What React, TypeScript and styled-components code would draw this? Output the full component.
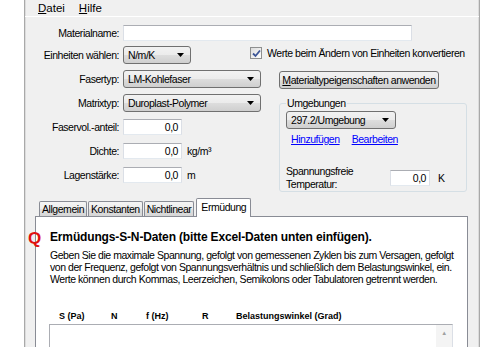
import styled, { createGlobalStyle } from "styled-components";

const GlobalStyle = createGlobalStyle`
  html, body {
    margin: 0;
    padding: 0;
    background: #ffffff;
  }
  body {
    font-family: "Liberation Sans", Arial, sans-serif;
    font-size: 10.5px;
    letter-spacing: -0.45px;
    color: #000000;
  }
`;

const ArrowDown = () => (
  <svg width="7" height="4" viewBox="0 0 7 4">
    <path d="M0 0 H7 L3.5 4 Z" fill="#000" />
  </svg>
);

const CheckMark = () => (
  <svg width="9" height="9" viewBox="0 0 9 9">
    <path d="M1 4.5 L3.5 7 L8 1.5" fill="none" stroke="#3c5597" strokeWidth="1.8" />
  </svg>
);

const App = () => {
  return (
    <>
      <GlobalStyle />
      <S.Window>
        <S.MenuBar>
          <S.MenuItem>
            <u>D</u>atei
          </S.MenuItem>
          <S.MenuItem>
            <u>H</u>ilfe
          </S.MenuItem>
        </S.MenuBar>
        <S.Content>
          <S.NameRow>
            <S.Label>Materialname:</S.Label>
            <S.TextInput $w={289} />
          </S.NameRow>
          <S.Upper>
            <S.LeftCol>
              <S.Row>
                <S.Label>Einheiten wählen:</S.Label>
                <S.Combo $w={68}>
                  N/m/K
                  <ArrowDown />
                </S.Combo>
                <S.CheckLine>
                  <S.CheckBox>
                    <CheckMark />
                  </S.CheckBox>
                  Werte beim Ändern von Einheiten konvertieren
                </S.CheckLine>
              </S.Row>
              <S.Row>
                <S.Label>Fasertyp:</S.Label>
                <S.Combo $w={138}>
                  LM-Kohlefaser
                  <ArrowDown />
                </S.Combo>
              </S.Row>
              <S.Row>
                <S.Label>Matrixtyp:</S.Label>
                <S.Combo $w={138}>
                  Duroplast-Polymer
                  <ArrowDown />
                </S.Combo>
              </S.Row>
              <S.Row>
                <S.Label>Faservol.-anteil:</S.Label>
                <S.TextInput $w={59}>0,0</S.TextInput>
              </S.Row>
              <S.Row>
                <S.Label>Dichte:</S.Label>
                <S.TextInput $w={59}>0,0</S.TextInput>
                <S.Unit>kg/m³</S.Unit>
              </S.Row>
              <S.Row>
                <S.Label>Lagenstärke:</S.Label>
                <S.TextInput $w={59}>0,0</S.TextInput>
                <S.Unit>m</S.Unit>
              </S.Row>
            </S.LeftCol>
            <S.RightCol>
              <S.Button>
                <u>M</u>aterialtypeigenschaften anwenden
              </S.Button>
              <S.Group>
                <S.Legend>Umgebungen</S.Legend>
                <S.Combo $w={110}>
                  297.2/Umgebung
                  <ArrowDown />
                </S.Combo>
                <S.LinkRow>
                  <S.Link>Hinzufügen</S.Link>
                  <S.Link>Bearbeiten</S.Link>
                </S.LinkRow>
                <S.TempRow>
                  <S.TempLabel>
                    Spannungsfreie
                    <br />
                    Temperatur:
                  </S.TempLabel>
                  <S.TextInput $w={40}>0,0</S.TextInput>
                  <S.TempUnit>K</S.TempUnit>
                </S.TempRow>
              </S.Group>
            </S.RightCol>
          </S.Upper>
          <S.TabArea>
            <S.TabStrip>
              <S.Tab>Allgemein</S.Tab>
              <S.Tab>Konstanten</S.Tab>
              <S.Tab>Nichtlinear</S.Tab>
              <S.Tab $active>Ermüdung</S.Tab>
            </S.TabStrip>
            <S.Panel>
              <S.Heading>Ermüdungs-S-N-Daten (bitte Excel-Daten unten einfügen).</S.Heading>
              <S.Info>
                Geben Sie die maximale Spannung, gefolgt von gemessenen Zyklen bis zum Versagen, gefolgt
                <br />
                von der Frequenz, gefolgt von Spannungsverhältnis und schließlich dem Belastungswinkel, ein.
                <br />
                Werte können durch Kommas, Leerzeichen, Semikolons oder Tabulatoren getrennt werden.
              </S.Info>
              <S.ColumnHeads>
                <span>S (Pa)</span>
                <span>N</span>
                <span>f (Hz)</span>
                <span>R</span>
                <span>Belastungswinkel (Grad)</span>
              </S.ColumnHeads>
              <S.DataBox>
                <S.ScrollBar>
                  <S.ScrollArrow>▲</S.ScrollArrow>
                </S.ScrollBar>
              </S.DataBox>
            </S.Panel>
          </S.TabArea>
        </S.Content>
        <S.Marker>Q</S.Marker>
      </S.Window>
    </>
  );
};

const S = {
  Window: styled.div`
    position: relative;
    box-sizing: border-box;
    margin-left: 24px;
    width: 456px;
    height: 347px;
    overflow: hidden;
    background: #f0f0f0;
    border-left: 1px solid #a9a9a9;
    border-right: 1px solid #a9a9a9;
    box-shadow: inset 1px 0 #dcdcdc, inset -1px 0 #dcdcdc;
  `,
  MenuBar: styled.div`
    display: flex;
    gap: 14px;
    height: 16px;
    padding-left: 13px;
    align-items: center;
    border-bottom: 1px solid #ffffff;
    font-size: 11.5px;
    letter-spacing: 0;
  `,
  MenuItem: styled.span`
    line-height: 16px;
  `,
  Content: styled.div`
    padding-top: 8px;
  `,
  NameRow: styled.div`
    display: flex;
    align-items: center;
    height: 16px;
  `,
  Label: styled.span`
    width: 94px;
    margin-right: 4px;
    text-align: right;
    white-space: nowrap;
    flex-shrink: 0;
  `,
  TextInput: styled.div<{ $w: number }>`
    box-sizing: border-box;
    width: ${({ $w }) => $w}px;
    height: 16px;
    line-height: 14px;
    padding-right: 3px;
    text-align: right;
    background: #ffffff;
    border: 1px solid #dbdfe6;
    border-top-color: #abadb3;
    border-bottom-color: #e3e9ef;
    flex-shrink: 0;
  `,
  Upper: styled.div`
    display: flex;
    margin-top: 5px;
  `,
  LeftCol: styled.div`
    width: 254px;
    display: flex;
    flex-direction: column;
    gap: 6px;
  `,
  Row: styled.div`
    display: flex;
    align-items: center;
    height: 18px;
    white-space: nowrap;
  `,
  Combo: styled.div<{ $w: number }>`
    box-sizing: border-box;
    width: ${({ $w }) => $w}px;
    height: 18px;
    display: flex;
    align-items: center;
    justify-content: space-between;
    padding: 0 6px 0 4px;
    border: 1px solid #707070;
    border-radius: 3px;
    background: linear-gradient(#f2f2f2 0%, #ebebeb 50%, #dddddd 51%, #cfcfcf 100%);
    white-space: nowrap;
    flex-shrink: 0;
  `,
  CheckLine: styled.label`
    display: flex;
    align-items: center;
    gap: 5px;
    margin-left: 59px;
    margin-top: -4px;
  `,
  CheckBox: styled.span`
    box-sizing: border-box;
    width: 12px;
    height: 12px;
    display: flex;
    align-items: center;
    justify-content: center;
    border: 1px solid #8e8f8f;
    background: linear-gradient(135deg, #dcdcdc, #ffffff);
  `,
  Unit: styled.span`
    margin-left: 5px;
  `,
  RightCol: styled.div`
    width: 188px;
    padding-top: 25px;
    display: flex;
    flex-direction: column;
    align-items: flex-start;
  `,
  Button: styled.div`
    box-sizing: border-box;
    width: 160px;
    height: 18px;
    line-height: 16px;
    text-align: center;
    white-space: nowrap;
    border: 1px solid #707070;
    border-radius: 3px;
    background: linear-gradient(#f2f2f2 0%, #ebebeb 50%, #dddddd 51%, #cfcfcf 100%);
  `,
  Group: styled.fieldset`
    box-sizing: border-box;
    width: 188px;
    margin: 8px 0 0 0;
    padding: 1px 6px 0 6px;
    border: 1px solid #d5dfe5;
    border-radius: 3px;
    min-inline-size: 0;
  `,
  Legend: styled.legend`
    padding: 0 1px;
    line-height: 13px;
  `,
  LinkRow: styled.div`
    display: flex;
    gap: 12px;
    margin-top: 4px;
    padding-left: 5px;
    line-height: 13px;
  `,
  Link: styled.span`
    color: #0000ff;
    text-decoration: underline;
  `,
  TempRow: styled.div`
    display: flex;
    align-items: center;
    margin-top: 19px;
  `,
  TempLabel: styled.span`
    width: 104px;
    line-height: 13px;
    flex-shrink: 0;
  `,
  TempUnit: styled.span`
    margin-left: 8px;
  `,
  TabArea: styled.div`
    margin: 6px 0 0 10px;
    width: 433px;
  `,
  TabStrip: styled.div`
    display: flex;
    align-items: flex-end;
    height: 18px;
    padding-left: 4px;
  `,
  Tab: styled.div<{ $active?: boolean }>`
    position: relative;
    box-sizing: border-box;
    height: ${({ $active }) => ($active ? "19px" : "15px")};
    margin: ${({ $active }) => ($active ? "0 0 -1px 1px" : "0 1px 0 0")};
    padding: ${({ $active }) => ($active ? "2px 4px 0" : "1px 2px 0")};
    line-height: 13px;
    border: 1px solid #898c95;
    border-bottom: none;
    border-radius: 2px 2px 0 0;
    background: ${({ $active }) =>
      $active ? "#ffffff" : "linear-gradient(#f5f5f5 0%, #ececec 50%, #e0e0e0 51%, #d6d6d6 100%)"};
    z-index: ${({ $active }) => ($active ? 1 : 0)};
    white-space: nowrap;
  `,
  Panel: styled.div`
    box-sizing: border-box;
    height: 140px;
    padding: 0 0 0 14px;
    background: #ffffff;
    border: 1px solid #898c95;
  `,
  Heading: styled.div`
    margin-top: 13px;
    font-weight: bold;
    font-size: 12px;
    letter-spacing: -0.15px;
    line-height: 14px;
    white-space: nowrap;
  `,
  Info: styled.div`
    margin-top: 5px;
    line-height: 12px;
    white-space: nowrap;
  `,
  ColumnHeads: styled.div`
    display: grid;
    grid-template-columns: 52px 35px 56px 34px auto;
    margin-top: 25px;
    padding-left: 9px;
    font-weight: bold;
    font-size: 9px;
    letter-spacing: 0;
    line-height: 12px;
  `,
  DataBox: styled.div`
    box-sizing: border-box;
    display: flex;
    justify-content: flex-end;
    width: 404px;
    height: 40px;
    margin: 2px 0 0 -1px;
    border: 1px solid #abadb3;
    border-right-color: #dbdfe6;
    background: #ffffff;
  `,
  ScrollBar: styled.div`
    width: 16px;
    background: #f4f4f4;
    display: flex;
    justify-content: center;
  `,
  ScrollArrow: styled.span`
    margin-top: 4px;
    font-size: 6px;
    line-height: 8px;
    color: #a0a0a0;
  `,
  Marker: styled.div`
    position: absolute;
    left: 3px;
    top: 230px;
    font-weight: bold;
    font-size: 17px;
    letter-spacing: 0;
    line-height: 18px;
    color: #e01010;
  `,
};

export default App;
